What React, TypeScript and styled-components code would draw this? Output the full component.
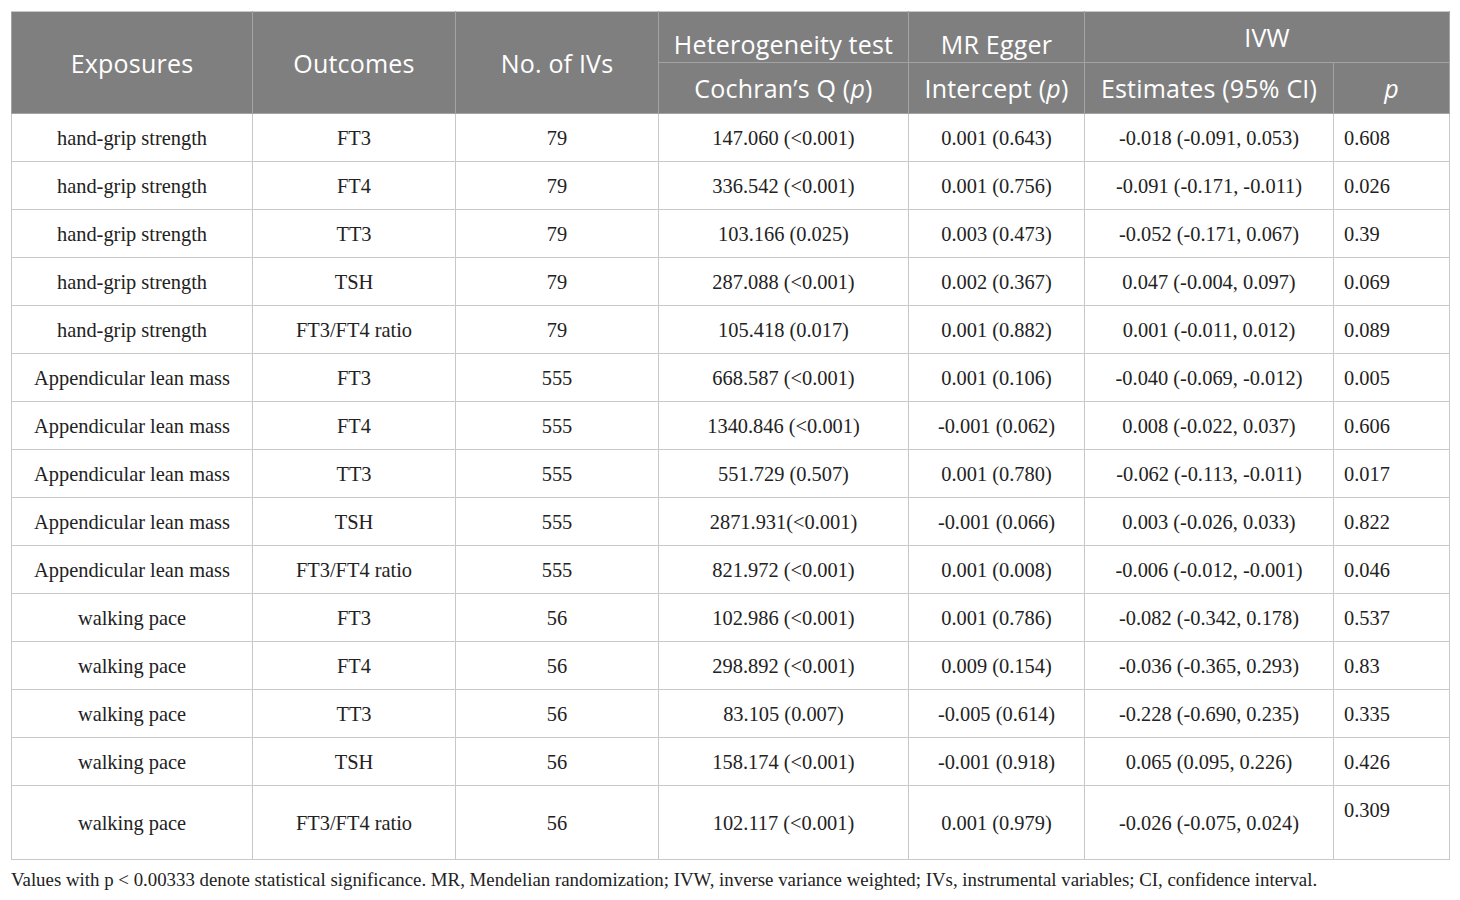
import React from "react";
import styled, { createGlobalStyle } from "styled-components";

const Global = createGlobalStyle`
  html, body { margin: 0; padding: 0; background: #ffffff; }
  body { font-family: "Liberation Serif", "Times New Roman", serif; color: #222; }
`;

const Page = styled.div`
  padding: 11px 11px 0 11px;
`;

const Table = styled.table`
  width: 1438px;
  table-layout: fixed;
  border-collapse: collapse;
  border: 1px solid #c9c9c9;
`;

const HeadCell = styled.th<{ $valign?: "bottom" | "middle"; $align?: "center" | "left" }>`
  background: #7f7f7f;
  color: #ffffff;
  font-family: "Open Sans", "Liberation Sans", sans-serif;
  font-weight: 400;
  font-size: 25px;
  letter-spacing: 0.2px;
  line-height: 30px;
  text-align: ${(p) => p.$align ?? "center"};
  vertical-align: middle;
  padding: ${(p) => (p.$valign === "bottom" ? "17px 4px 3px" : "10px 4px")};
  border: 1px solid #a3a3a3;
  border-top-color: #c9c9c9;
  white-space: nowrap;
`;

const Italic = styled.span`
  font-style: italic;
`;

const Cell = styled.td<{ $align?: "center" | "left" }>`
  font-size: 20.4px;
  line-height: 26px;
  text-align: ${(p) => p.$align ?? "center"};
  vertical-align: middle;
  padding: 11px 10px 10px;
  border: 1px solid #c9c9c9;
  color: #222;
  white-space: nowrap;
`;

const TopCell = styled(Cell)`
  vertical-align: top;
`;

const Footnote = styled.p`
  margin: 9px 0 0 0;
  font-size: 18.85px;
  line-height: 22px;
  color: #222;
  white-space: nowrap;
`;

type Row = [string, string, string, string, string, string, string];

const rows: Row[] = [
  ["hand-grip strength", "FT3", "79", "147.060 (<0.001)", "0.001 (0.643)", "-0.018 (-0.091, 0.053)", "0.608"],
  ["hand-grip strength", "FT4", "79", "336.542 (<0.001)", "0.001 (0.756)", "-0.091 (-0.171, -0.011)", "0.026"],
  ["hand-grip strength", "TT3", "79", "103.166 (0.025)", "0.003 (0.473)", "-0.052 (-0.171, 0.067)", "0.39"],
  ["hand-grip strength", "TSH", "79", "287.088 (<0.001)", "0.002 (0.367)", "0.047 (-0.004, 0.097)", "0.069"],
  ["hand-grip strength", "FT3/FT4 ratio", "79", "105.418 (0.017)", "0.001 (0.882)", "0.001 (-0.011, 0.012)", "0.089"],
  ["Appendicular lean mass", "FT3", "555", "668.587 (<0.001)", "0.001 (0.106)", "-0.040 (-0.069, -0.012)", "0.005"],
  ["Appendicular lean mass", "FT4", "555", "1340.846 (<0.001)", "-0.001 (0.062)", "0.008 (-0.022, 0.037)", "0.606"],
  ["Appendicular lean mass", "TT3", "555", "551.729 (0.507)", "0.001 (0.780)", "-0.062 (-0.113, -0.011)", "0.017"],
  ["Appendicular lean mass", "TSH", "555", "2871.931(<0.001)", "-0.001 (0.066)", "0.003 (-0.026, 0.033)", "0.822"],
  ["Appendicular lean mass", "FT3/FT4 ratio", "555", "821.972 (<0.001)", "0.001 (0.008)", "-0.006 (-0.012, -0.001)", "0.046"],
  ["walking pace", "FT3", "56", "102.986 (<0.001)", "0.001 (0.786)", "-0.082 (-0.342, 0.178)", "0.537"],
  ["walking pace", "FT4", "56", "298.892 (<0.001)", "0.009 (0.154)", "-0.036 (-0.365, 0.293)", "0.83"],
  ["walking pace", "TT3", "56", "83.105 (0.007)", "-0.005 (0.614)", "-0.228 (-0.690, 0.235)", "0.335"],
  ["walking pace", "TSH", "56", "158.174 (<0.001)", "-0.001 (0.918)", "0.065 (0.095, 0.226)", "0.426"],
];

const lastRow: Row = ["walking pace", "FT3/FT4 ratio", "56", "102.117 (<0.001)", "0.001 (0.979)", "-0.026 (-0.075, 0.024)", "0.309"];

const widths = [241, 203, 203, 250, 176, 249, 116];

export default function App() {
  return (
    <Page>
      <Global />
      <Table>
        <colgroup>
          {widths.map((w, i) => (
            <col key={i} style={{ width: w }} />
          ))}
        </colgroup>
        <thead>
          <tr>
            <HeadCell rowSpan={2}>Exposures</HeadCell>
            <HeadCell rowSpan={2}>Outcomes</HeadCell>
            <HeadCell rowSpan={2}>No. of IVs</HeadCell>
            <HeadCell $valign="bottom">Heterogeneity test</HeadCell>
            <HeadCell $valign="bottom">MR Egger</HeadCell>
            <HeadCell colSpan={2}>IVW</HeadCell>
          </tr>
          <tr>
            <HeadCell>
              Cochran’s Q (<Italic>p</Italic>)
            </HeadCell>
            <HeadCell>
              Intercept (<Italic>p</Italic>)
            </HeadCell>
            <HeadCell>Estimates (95% CI)</HeadCell>
            <HeadCell>
              <Italic>p</Italic>
            </HeadCell>
          </tr>
        </thead>
        <tbody>
          {rows.map((r, i) => (
            <tr key={i}>
              {r.slice(0, 6).map((c, j) => (
                <Cell key={j}>{c}</Cell>
              ))}
              <Cell $align="left">{r[6]}</Cell>
            </tr>
          ))}
          <tr>
            {lastRow.slice(0, 6).map((c, j) => (
              <Cell key={j}>{c}</Cell>
            ))}
            <TopCell $align="left">
              {lastRow[6]}
              <br />
              &nbsp;
            </TopCell>
          </tr>
        </tbody>
      </Table>
      <Footnote>
        Values with p &lt; 0.00333 denote statistical significance. MR, Mendelian randomization; IVW, inverse variance
        weighted; IVs, instrumental variables; CI, confidence interval.
      </Footnote>
    </Page>
  );
}
